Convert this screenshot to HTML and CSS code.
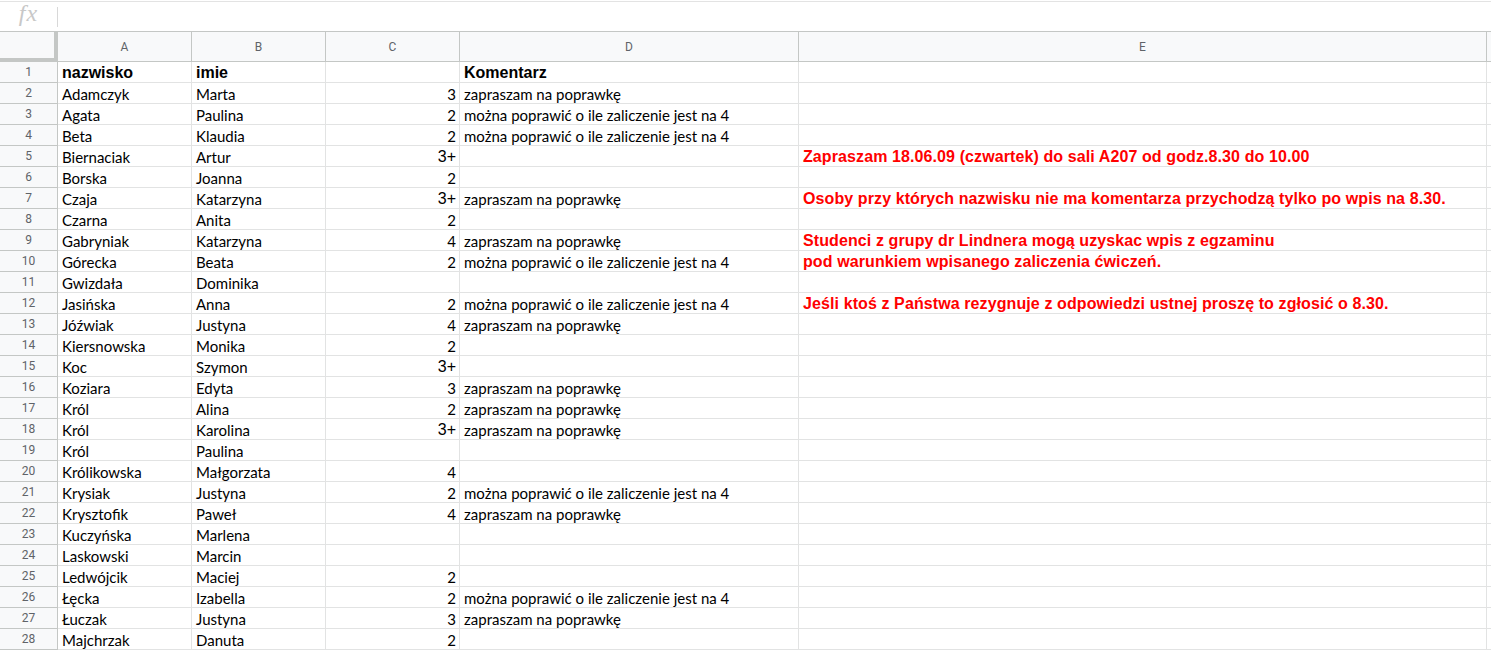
FILE: index.html
```html
<!DOCTYPE html>
<html lang="pl">
<head>
<meta charset="utf-8">
<title>Arkusz</title>
<link rel="stylesheet" href="styles.css">
</head>
<body>
<div class="fxbar">
  <span class="fx">fx</span>
  <span class="fxsep"></span>
</div>
<div class="sheet">
  <div class="row head">
    <div class="corner"></div>
    <div class="ch">A</div><div class="ch">B</div><div class="ch">C</div><div class="ch">D</div><div class="ch">E</div><div class="ch extra"></div>
  </div>
  <div class="row"><div class="rn">1</div><div class="c b">nazwisko</div><div class="c b">imie</div><div class="c"></div><div class="c b">Komentarz</div><div class="c"></div><div class="c extra"></div></div>
  <div class="row"><div class="rn">2</div><div class="c">Adamczyk</div><div class="c">Marta</div><div class="c n">3</div><div class="c">zapraszam na poprawkę</div><div class="c"></div><div class="c extra"></div></div>
  <div class="row"><div class="rn">3</div><div class="c">Agata</div><div class="c">Paulina</div><div class="c n">2</div><div class="c">można poprawić o ile zaliczenie jest na 4</div><div class="c"></div><div class="c extra"></div></div>
  <div class="row"><div class="rn">4</div><div class="c">Beta</div><div class="c">Klaudia</div><div class="c n">2</div><div class="c">można poprawić o ile zaliczenie jest na 4</div><div class="c"></div><div class="c extra"></div></div>
  <div class="row"><div class="rn">5</div><div class="c">Biernaciak</div><div class="c">Artur</div><div class="c n s">3+</div><div class="c"></div><div class="c red">Zapraszam 18.06.09 (czwartek) do sali A207 od godz.8.30 do 10.00</div><div class="c extra"></div></div>
  <div class="row"><div class="rn">6</div><div class="c">Borska</div><div class="c">Joanna</div><div class="c n">2</div><div class="c"></div><div class="c"></div><div class="c extra"></div></div>
  <div class="row"><div class="rn">7</div><div class="c">Czaja</div><div class="c">Katarzyna</div><div class="c n s">3+</div><div class="c">zapraszam na poprawkę</div><div class="c red">Osoby przy których nazwisku nie ma komentarza przychodzą tylko po wpis na 8.30.</div><div class="c extra"></div></div>
  <div class="row"><div class="rn">8</div><div class="c">Czarna</div><div class="c">Anita</div><div class="c n">2</div><div class="c"></div><div class="c"></div><div class="c extra"></div></div>
  <div class="row"><div class="rn">9</div><div class="c">Gabryniak</div><div class="c">Katarzyna</div><div class="c n">4</div><div class="c">zapraszam na poprawkę</div><div class="c red">Studenci z grupy dr Lindnera mogą uzyskac wpis z egzaminu</div><div class="c extra"></div></div>
  <div class="row"><div class="rn">10</div><div class="c">Górecka</div><div class="c">Beata</div><div class="c n">2</div><div class="c">można poprawić o ile zaliczenie jest na 4</div><div class="c red">pod warunkiem wpisanego zaliczenia ćwiczeń.</div><div class="c extra"></div></div>
  <div class="row"><div class="rn">11</div><div class="c">Gwizdała</div><div class="c">Dominika</div><div class="c n"></div><div class="c"></div><div class="c"></div><div class="c extra"></div></div>
  <div class="row"><div class="rn">12</div><div class="c">Jasińska</div><div class="c">Anna</div><div class="c n">2</div><div class="c">można poprawić o ile zaliczenie jest na 4</div><div class="c red">Jeśli ktoś z Państwa rezygnuje z odpowiedzi ustnej proszę to zgłosić o 8.30.</div><div class="c extra"></div></div>
  <div class="row"><div class="rn">13</div><div class="c">Jóźwiak</div><div class="c">Justyna</div><div class="c n">4</div><div class="c">zapraszam na poprawkę</div><div class="c"></div><div class="c extra"></div></div>
  <div class="row"><div class="rn">14</div><div class="c">Kiersnowska</div><div class="c">Monika</div><div class="c n">2</div><div class="c"></div><div class="c"></div><div class="c extra"></div></div>
  <div class="row"><div class="rn">15</div><div class="c">Koc</div><div class="c">Szymon</div><div class="c n s">3+</div><div class="c"></div><div class="c"></div><div class="c extra"></div></div>
  <div class="row"><div class="rn">16</div><div class="c">Koziara</div><div class="c">Edyta</div><div class="c n">3</div><div class="c">zapraszam na poprawkę</div><div class="c"></div><div class="c extra"></div></div>
  <div class="row"><div class="rn">17</div><div class="c">Król</div><div class="c">Alina</div><div class="c n">2</div><div class="c">zapraszam na poprawkę</div><div class="c"></div><div class="c extra"></div></div>
  <div class="row"><div class="rn">18</div><div class="c">Król</div><div class="c">Karolina</div><div class="c n s">3+</div><div class="c">zapraszam na poprawkę</div><div class="c"></div><div class="c extra"></div></div>
  <div class="row"><div class="rn">19</div><div class="c">Król</div><div class="c">Paulina</div><div class="c n"></div><div class="c"></div><div class="c"></div><div class="c extra"></div></div>
  <div class="row"><div class="rn">20</div><div class="c">Królikowska</div><div class="c">Małgorzata</div><div class="c n">4</div><div class="c"></div><div class="c"></div><div class="c extra"></div></div>
  <div class="row"><div class="rn">21</div><div class="c">Krysiak</div><div class="c">Justyna</div><div class="c n">2</div><div class="c">można poprawić o ile zaliczenie jest na 4</div><div class="c"></div><div class="c extra"></div></div>
  <div class="row"><div class="rn">22</div><div class="c">Krysztofik</div><div class="c">Paweł</div><div class="c n">4</div><div class="c">zapraszam na poprawkę</div><div class="c"></div><div class="c extra"></div></div>
  <div class="row"><div class="rn">23</div><div class="c">Kuczyńska</div><div class="c">Marlena</div><div class="c n"></div><div class="c"></div><div class="c"></div><div class="c extra"></div></div>
  <div class="row"><div class="rn">24</div><div class="c">Laskowski</div><div class="c">Marcin</div><div class="c n"></div><div class="c"></div><div class="c"></div><div class="c extra"></div></div>
  <div class="row"><div class="rn">25</div><div class="c">Ledwójcik</div><div class="c">Maciej</div><div class="c n">2</div><div class="c"></div><div class="c"></div><div class="c extra"></div></div>
  <div class="row"><div class="rn">26</div><div class="c">Łęcka</div><div class="c">Izabella</div><div class="c n">2</div><div class="c">można poprawić o ile zaliczenie jest na 4</div><div class="c"></div><div class="c extra"></div></div>
  <div class="row"><div class="rn">27</div><div class="c">Łuczak</div><div class="c">Justyna</div><div class="c n">3</div><div class="c">zapraszam na poprawkę</div><div class="c"></div><div class="c extra"></div></div>
  <div class="row"><div class="rn">28</div><div class="c">Majchrzak</div><div class="c">Danuta</div><div class="c n">2</div><div class="c"></div><div class="c"></div><div class="c extra"></div></div>
</div>
</body>
</html>
```

FILE: styles.css
```css
html, body {
  margin: 0;
  padding: 0;
  background: #ffffff;
  overflow: hidden;
}
body {
  width: 1491px;
  height: 652px;
  font-family: Lato, "Liberation Sans", sans-serif;
}
.fxbar {
  height: 29px;
  margin-top: 1px;
  border-top: 1px solid #e3e3e3;
  border-bottom: 1px solid #c4c7c5;
  display: flex;
  align-items: center;
  box-sizing: content-box;
}
.fx {
  font-family: "Liberation Serif", serif;
  font-style: italic;
  font-size: 24px;
  color: #c8c8c8;
  width: 57px;
  text-align: center;
  margin-top: -7px;
  letter-spacing: 1px;
}
.fxsep {
  width: 1px;
  height: 20px;
  background: #d8d8d8;
}
.sheet {
  display: flex;
  flex-direction: column;
}
.row {
  display: grid;
  grid-template-columns: 58px 134px 134px 134px 339px 688px 6px;
  height: 21px;
}
.row.head {
  height: 30px;
}
.corner {
  background: #f8f9fa;
  border-right: 4px solid #c4c7c5;
  border-bottom: 4px solid #c4c7c5;
  box-sizing: border-box;
}
.ch {
  background: #f8f9fa;
  border-right: 1px solid #c4c7c5;
  border-bottom: 1px solid #c4c7c5;
  box-sizing: border-box;
  font-family: Roboto, "Liberation Sans", sans-serif;
  font-size: 12px;
  color: #5f6368;
  display: flex;
  align-items: center;
  justify-content: center;
  padding-top: 1px;
}
.ch.extra {
  border-right: 1px solid #e2e3e3;
}
.rn {
  background: #f8f9fa;
  border-right: 1px solid #c4c7c5;
  border-bottom: 1px solid #c4c7c5;
  box-sizing: border-box;
  font-family: Roboto, "Liberation Sans", sans-serif;
  font-size: 12px;
  color: #5f6368;
  display: flex;
  align-items: center;
  justify-content: center;
}
.c {
  border-right: 1px solid #e2e3e3;
  border-bottom: 1px solid #e2e3e3;
  box-sizing: border-box;
  font-size: 15px;
  color: #000000;
  white-space: nowrap;
  padding: 0 3px 0 4px;
  display: flex;
  align-items: flex-end;
  line-height: 17px;
  overflow: visible;
}
.c.n {
  justify-content: flex-end;
}
.c.s {
  font-family: "Liberation Sans", Arial, sans-serif;
  font-size: 16px;
  padding-bottom: 1px;
}
.c.b {
  font-family: "Liberation Sans", Arial, sans-serif;
  font-weight: bold;
  font-size: 16px;
  padding-bottom: 1px;
}
.c.red {
  font-family: "Liberation Sans", Arial, sans-serif;
  font-weight: bold;
  font-size: 16px;
  color: #ff0000;
  letter-spacing: 0.1px;
  padding-bottom: 1px;
}
.c.extra {
  padding: 0;
}
```
